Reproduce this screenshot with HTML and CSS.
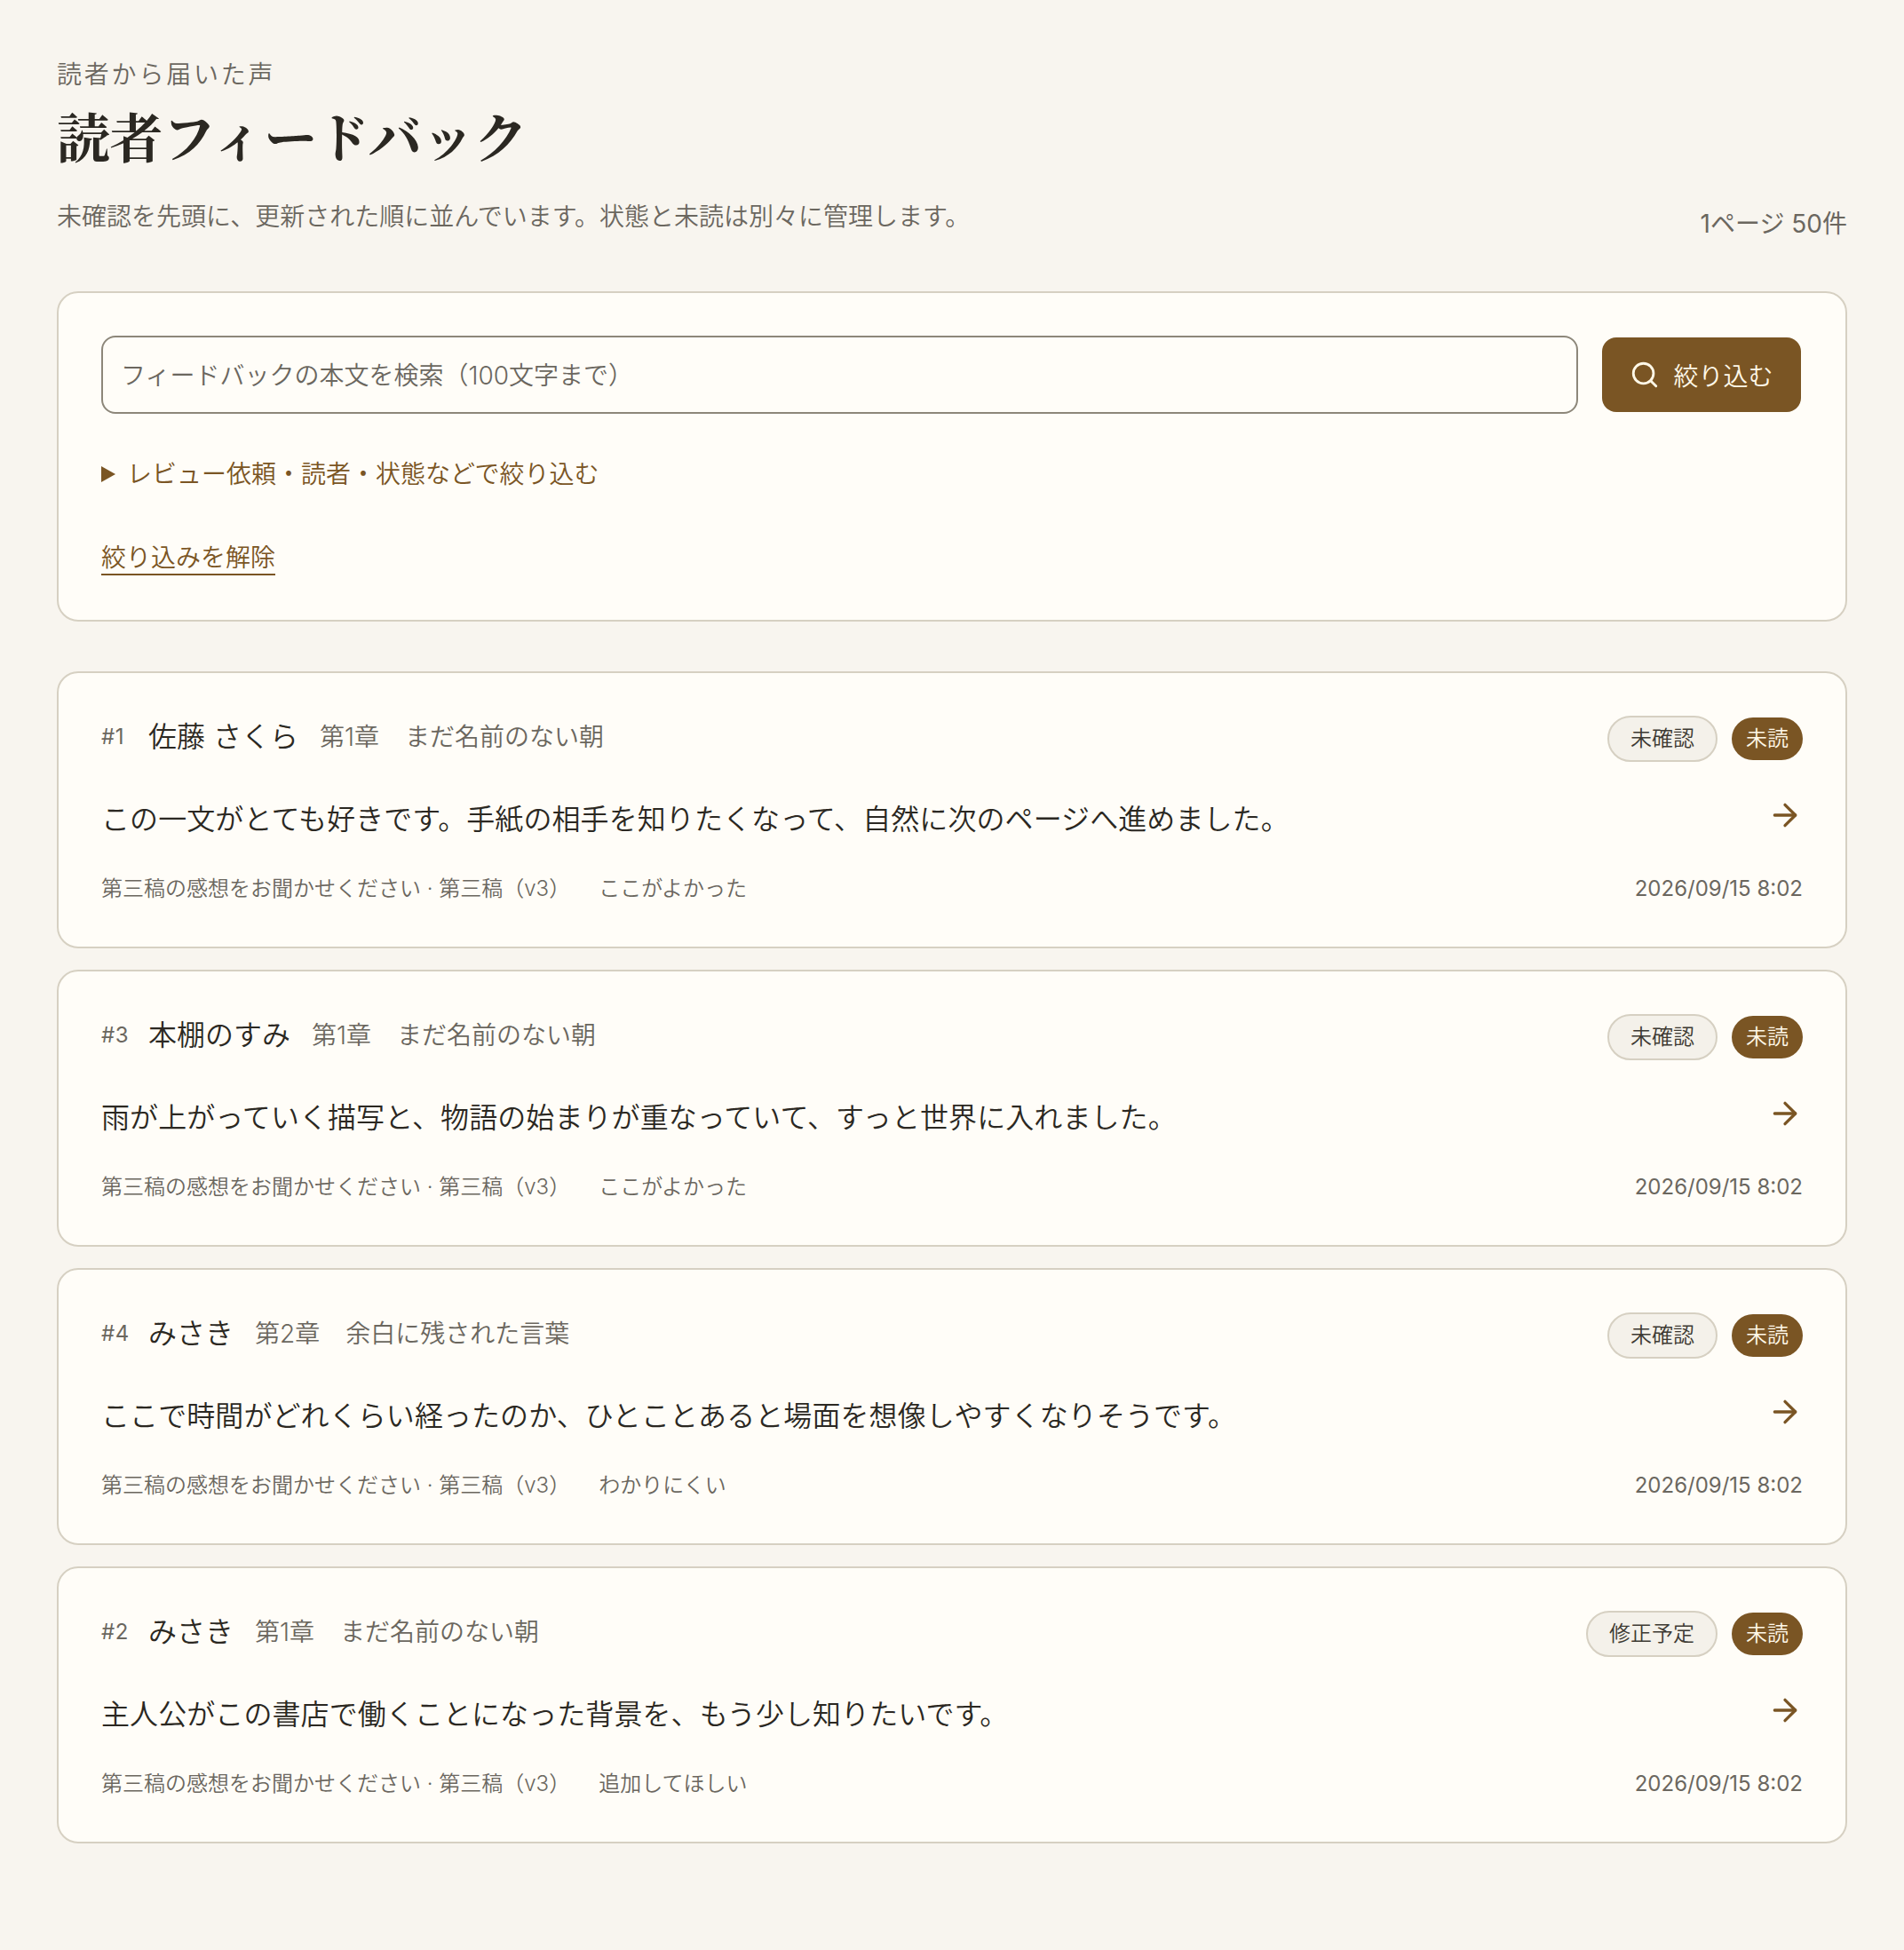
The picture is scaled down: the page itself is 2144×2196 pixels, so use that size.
FILE: index.html
```html
<!DOCTYPE html>
<html lang="ja">
<head>
<meta charset="utf-8">
<title>読者フィードバック</title>
<link rel="stylesheet" href="styles.css">
</head>
<body>
<main class="page">
  <header class="page-head">
    <div class="page-intro">
      <p class="eyebrow">読者から届いた声</p>
      <h1 class="title">読者フィードバック</h1>
      <p class="lead">未確認を先頭に、更新された順に並んでいます。状態と未読は別々に管理します。</p>
    </div>
    <p class="page-size">1ページ 50件</p>
  </header>

  <section class="card filter">
    <div class="search-row">
      <input class="search-input" type="text" placeholder="フィードバックの本文を検索（100文字まで）">
      <button class="search-btn" type="button">
        <svg class="search-icon" viewBox="0 0 24 24" fill="none" stroke="currentColor" stroke-width="2" stroke-linecap="round" stroke-linejoin="round"><circle cx="11" cy="11" r="8"/><path d="m21 21-4.3-4.3"/></svg>
        <span>絞り込む</span>
      </button>
    </div>
    <div class="disclosure"><span class="tri"></span><span>レビュー依頼・読者・状態などで絞り込む</span></div>
    <a class="clear" href="#">絞り込みを解除</a>
  </section>

  <section class="list">
    <article class="card item">
      <div class="item-top">
        <div class="who"><span class="num">#1</span><span class="name">佐藤 さくら</span><span class="chapter">第1章</span><span class="work">まだ名前のない朝</span></div>
        <div class="pills"><span class="pill status">未確認</span><span class="pill unread">未読</span></div>
      </div>
      <div class="item-body">
        <p class="comment">この一文がとても好きです。手紙の相手を知りたくなって、自然に次のページへ進めました。</p>
        <svg class="arrow" viewBox="0 0 24 24" fill="none" stroke="currentColor" stroke-width="2" stroke-linecap="round" stroke-linejoin="round"><path d="M5 12h14"/><path d="m12 5 7 7-7 7"/></svg>
      </div>
      <div class="item-meta">
        <div class="meta-left"><span>第三稿の感想をお聞かせください · 第三稿（v3）</span><span>ここがよかった</span></div>
        <span class="date">2026/09/15 8:02</span>
      </div>
    </article>

    <article class="card item">
      <div class="item-top">
        <div class="who"><span class="num">#3</span><span class="name">本棚のすみ</span><span class="chapter">第1章</span><span class="work">まだ名前のない朝</span></div>
        <div class="pills"><span class="pill status">未確認</span><span class="pill unread">未読</span></div>
      </div>
      <div class="item-body">
        <p class="comment">雨が上がっていく描写と、物語の始まりが重なっていて、すっと世界に入れました。</p>
        <svg class="arrow" viewBox="0 0 24 24" fill="none" stroke="currentColor" stroke-width="2" stroke-linecap="round" stroke-linejoin="round"><path d="M5 12h14"/><path d="m12 5 7 7-7 7"/></svg>
      </div>
      <div class="item-meta">
        <div class="meta-left"><span>第三稿の感想をお聞かせください · 第三稿（v3）</span><span>ここがよかった</span></div>
        <span class="date">2026/09/15 8:02</span>
      </div>
    </article>

    <article class="card item">
      <div class="item-top">
        <div class="who"><span class="num">#4</span><span class="name">みさき</span><span class="chapter">第2章</span><span class="work">余白に残された言葉</span></div>
        <div class="pills"><span class="pill status">未確認</span><span class="pill unread">未読</span></div>
      </div>
      <div class="item-body">
        <p class="comment">ここで時間がどれくらい経ったのか、ひとことあると場面を想像しやすくなりそうです。</p>
        <svg class="arrow" viewBox="0 0 24 24" fill="none" stroke="currentColor" stroke-width="2" stroke-linecap="round" stroke-linejoin="round"><path d="M5 12h14"/><path d="m12 5 7 7-7 7"/></svg>
      </div>
      <div class="item-meta">
        <div class="meta-left"><span>第三稿の感想をお聞かせください · 第三稿（v3）</span><span>わかりにくい</span></div>
        <span class="date">2026/09/15 8:02</span>
      </div>
    </article>

    <article class="card item">
      <div class="item-top">
        <div class="who"><span class="num">#2</span><span class="name">みさき</span><span class="chapter">第1章</span><span class="work">まだ名前のない朝</span></div>
        <div class="pills"><span class="pill status">修正予定</span><span class="pill unread">未読</span></div>
      </div>
      <div class="item-body">
        <p class="comment">主人公がこの書店で働くことになった背景を、もう少し知りたいです。</p>
        <svg class="arrow" viewBox="0 0 24 24" fill="none" stroke="currentColor" stroke-width="2" stroke-linecap="round" stroke-linejoin="round"><path d="M5 12h14"/><path d="m12 5 7 7-7 7"/></svg>
      </div>
      <div class="item-meta">
        <div class="meta-left"><span>第三稿の感想をお聞かせください · 第三稿（v3）</span><span>追加してほしい</span></div>
        <span class="date">2026/09/15 8:02</span>
      </div>
    </article>
  </section>
</main>
</body>
</html>
```
FILE: styles.css
```css
* { box-sizing: border-box; }
html, body { margin: 0; padding: 0; }
body {
  background: #f8f5ef;
  color: #2b2822;
  font-family: Inter, "Noto Sans CJK JP", sans-serif;
  font-weight: 350;
}
p, h1 { margin: 0; }
.page { padding: 64px 64px 120px; }

.page-head { display: flex; justify-content: space-between; align-items: flex-end; margin-bottom: 56px; }
.eyebrow { font-size: 28px; line-height: 40px; letter-spacing: 0.1em; color: #6b675f; }
.title {
  margin-top: 6px;
  font-family: "Noto Serif CJK JP", "Liberation Serif", "Noto Sans CJK JP", serif;
  font-size: 60px; line-height: 84px; font-weight: 700; letter-spacing: -0.5px; color: #2b2822;
}
.lead { margin-top: 21px; font-size: 28px; line-height: 58px; margin-bottom: -1px; color: #6b675f; }
.page-size { font-size: 28px; line-height: 40px; font-weight: 400; color: #6b675f; }

.card { background: #fffdf8; border: 2px solid #d6d0c2; border-radius: 24px; }

.filter { padding: 48px 48px 50px; }
.search-row { display: flex; align-items: flex-start; gap: 24px; }
.search-input {
  flex: 1; min-width: 0; height: 88px; padding: 2px 20px 0;
  background: #fffdf8; border: 2px solid #8d877a; border-radius: 16px;
  font: inherit; font-size: 28px; color: #2b2822;
}
.search-input::placeholder { color: #6b675f; opacity: 1; }
.search-btn {
  display: flex; align-items: center; justify-content: center; gap: 15px;
  width: 224px; height: 84px; margin: 2px 2px 0 3px; padding: 0;
  background: #7a5524; border: 0; border-radius: 16px; color: #fff8e8;
  font: inherit; font-size: 28px;
}
.search-icon { width: 34px; height: 34px; }

.disclosure { display: flex; align-items: center; gap: 13px; margin-top: 48px; font-size: 28px; line-height: 40px; color: #7a5524; }
.tri { width: 0; height: 0; border-style: solid; border-width: 9.5px 0 9.5px 16px; border-color: transparent transparent transparent #7a5524; }
.clear {
  display: block; width: fit-content; margin-top: 53px; height: 41px; padding-top: 2px;
  font-size: 28px; line-height: 38px; color: #7a5524;
  text-decoration: none; border-bottom: 2px solid #7a5524;
}

.list { display: flex; flex-direction: column; gap: 24px; margin-top: 56px; }
.item { height: 312px; padding: 48px; }
.item-top { display: flex; justify-content: space-between; align-items: center; height: 52px; }
.who { display: flex; align-items: center; line-height: 40px; margin-bottom: 5px; }
.num { width: 53px; font-size: 24px; font-weight: 400; letter-spacing: 0.6px; color: #6b675f; }
.name { font-size: 32px; color: #2b2822; margin-right: 24px; }
.chapter { font-size: 28px; color: #6b675f; margin-right: 29px; }
.work { font-size: 28px; color: #6b675f; }
.pills { display: flex; align-items: center; gap: 16px; }
.pill { padding: 6px 16px; font-size: 24px; line-height: 36px; border-radius: 999px; }
.pill.status { padding: 6px 24px; background: #f4f1ea; border: 2px solid #d6d0c2; color: #3d3a33; }
.pill.unread { background: #7a5524; color: #fff8e8; }

.item-body { display: flex; justify-content: space-between; align-items: flex-start; margin-top: 40px; height: 50px; }
.comment { font-size: 32px; line-height: 50px; letter-spacing: 0.08px; color: #2b2822; }
.arrow { width: 40px; height: 40px; color: #7a5524; }

.item-meta { display: flex; justify-content: space-between; align-items: center; margin-top: 36px; height: 34px; font-size: 24px; line-height: 34px; color: #6b675f; }
.meta-left { display: flex; gap: 32px; }
.date { font-weight: 400; }
```
